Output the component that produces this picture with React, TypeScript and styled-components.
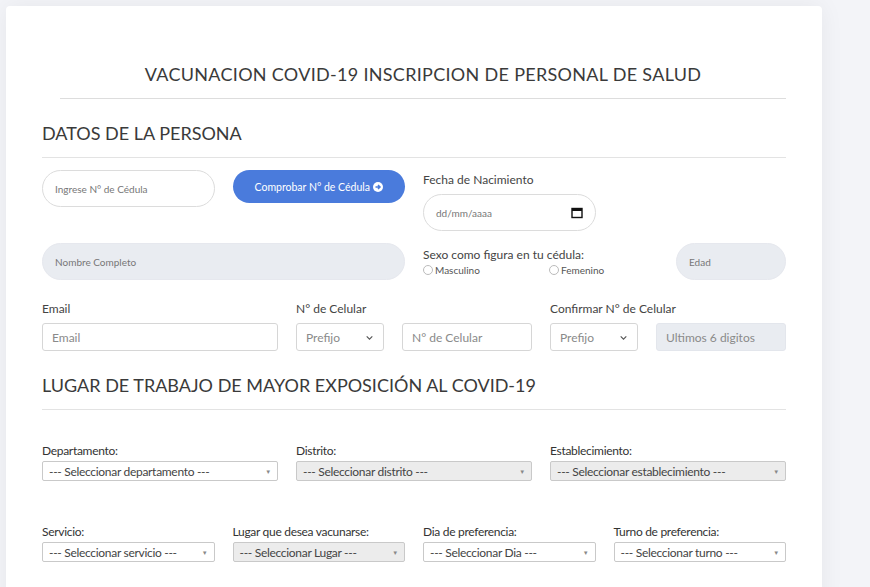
import React from 'react';
import styled, { createGlobalStyle } from 'styled-components';

const Global = createGlobalStyle`
  body { margin: 0; background: #f3f4f8; font-family: Lato, "Open Sans", sans-serif; color: #333; }
  * { box-sizing: border-box; }
`;

const Page = styled.div`
  padding: 6px 0 0 6px;
  height: 587px;
  overflow: hidden;
`;

const Card = styled.div`
  width: 816px;
  min-height: 600px;
  background: #fff;
  border-radius: 4px;
  box-shadow: 0 0 24px rgba(0, 0, 0, 0.06);
  padding: 57px 36px 0 36px;
`;

const Title = styled.h1`
  margin: 0 0 0 18px;
  font-size: 18px;
  font-weight: 400;
  text-align: center;
  letter-spacing: 0.3px;
  color: #3a3a3a;
  padding-bottom: 13px;
  border-bottom: 1px solid #ddd;
`;

const Section = styled.h2`
  margin: 23px 0 0;
  font-size: 18px;
  font-weight: 400;
  color: #3a3a3a;
  padding-bottom: 13px;
  border-bottom: 1px solid #e3e3e3;
`;

const Grid = styled.div<{ $cols: string; $top: number; $align?: string }>`
  display: grid;
  grid-template-columns: ${(p) => p.$cols};
  column-gap: 18px;
  margin-top: ${(p) => p.$top}px;
  align-items: ${(p) => p.$align || 'start'};
`;

const Field = styled.div`
  display: flex;
  flex-direction: column;
  min-width: 0;
`;

const Label = styled.label`
  font-size: 12px;
  color: #444;
  margin-bottom: 7px;
`;

const Pill = styled.div<{ $gray?: boolean }>`
  height: 37px;
  border-radius: 19px;
  border: 1px solid ${(p) => (p.$gray ? '#e6e8ee' : '#dcdcdc')};
  background: ${(p) => (p.$gray ? '#e9ecf1' : '#fff')};
  display: flex;
  align-items: center;
  justify-content: space-between;
  padding: 0 12px;
  font-size: 10px;
  color: #777;
`;

const BlueButton = styled.div`
  height: 33px;
  border-radius: 17px;
  background: #4a7bdc;
  color: #fff;
  font-size: 10.5px;
  display: flex;
  align-items: center;
  justify-content: center;
  gap: 3px;
`;

const Radios = styled.div`
  display: grid;
  grid-template-columns: 126px auto;
  font-size: 10px;
  color: #555;
`;

const Radio = styled.span`
  display: flex;
  align-items: center;
  gap: 2px;
  &::before {
    content: '';
    width: 8px;
    height: 8px;
    border: 1px solid #bbb;
    border-radius: 50%;
  }
`;

const Box = styled.div<{ $gray?: boolean }>`
  height: 28px;
  border: 1px solid ${(p) => (p.$gray ? '#e3e6ec' : '#d6d6d6')};
  border-radius: 3px;
  background: ${(p) => (p.$gray ? '#e9ecf1' : '#fff')};
  display: flex;
  align-items: center;
  justify-content: space-between;
  padding: 0 9px;
  font-size: 12px;
  color: #8a8a8a;
`;

const Pair = styled.div`
  display: grid;
  grid-template-columns: 88px 1fr;
  gap: 18px;
`;

const Select = styled.div<{ $gray?: boolean }>`
  height: 20px;
  border: 1px solid #c9c9c9;
  border-radius: 2px;
  background: ${(p) => (p.$gray ? '#ececec' : '#fff')};
  display: flex;
  align-items: center;
  justify-content: space-between;
  padding: 0 6px;
  font-size: 12px;
  color: #444;
  letter-spacing: -0.3px;
  &::after { content: '▼'; font-size: 6px; color: #888; }
`;

const SLabel = styled.div`
  font-size: 12px;
  color: #333;
  letter-spacing: -0.3px;
  margin-bottom: 3px;
`;

const Chevron = () => (
  <svg width="9" height="9" viewBox="0 0 16 16"><path d="M3 6l5 5 5-5" fill="none" stroke="#555" strokeWidth="2" /></svg>
);

const Cal = () => (
  <svg width="12" height="12" viewBox="0 0 12 12"><rect x="1" y="1.5" width="10" height="9" fill="none" stroke="#111" strokeWidth="1.4" /><rect x="1" y="1.5" width="10" height="2.5" fill="#111" /></svg>
);

const Arrow = () => (
  <svg width="10" height="10" viewBox="0 0 10 10"><circle cx="5" cy="5" r="5" fill="#fff" /><path d="M2.5 5h4M5 3l2 2-2 2" stroke="#4a7bdc" strokeWidth="1.5" fill="none" /></svg>
);

const SelectField = ({ label, text, gray }: { label: string; text: string; gray?: boolean }) => (
  <Field>
    <SLabel>{label}</SLabel>
    <Select $gray={gray}>{text}</Select>
  </Field>
);

const four = 'repeat(4, minmax(0, 1fr))';
const three = 'repeat(3, minmax(0, 1fr))';

export default function App() {
  return (
    <Page>
      <Global />
      <Card>
        <Title>VACUNACION COVID-19 INSCRIPCION DE PERSONAL DE SALUD</Title>
        <Section>DATOS DE LA PERSONA</Section>

        <Grid $cols={four} $top={12}>
          <Pill>Ingrese N° de Cédula</Pill>
          <BlueButton>Comprobar N° de Cédula <Arrow /></BlueButton>
          <Field style={{ gridColumn: 'span 2' }}>
            <Label style={{ marginTop: 2 }}>Fecha de Nacimiento</Label>
            <Pill style={{ width: 173 }}>dd/mm/aaaa <Cal /></Pill>
          </Field>
        </Grid>

        <Grid $cols={four} $top={12} $align="center">
          <Pill $gray style={{ gridColumn: 'span 2' }}>Nombre Completo</Pill>
          <Field>
            <Label style={{ marginBottom: 2 }}>Sexo como figura en tu cédula:</Label>
            <Radios>
              <Radio>Masculino</Radio>
              <Radio>Femenino</Radio>
            </Radios>
          </Field>
          <Pill $gray style={{ width: 110, justifySelf: 'end' }}>Edad</Pill>
        </Grid>

        <Grid $cols={three} $top={21}>
          <Field>
            <Label>Email</Label>
            <Box>Email</Box>
          </Field>
          <Field>
            <Label>N° de Celular</Label>
            <Pair>
              <Box>Prefijo <Chevron /></Box>
              <Box>N° de Celular</Box>
            </Pair>
          </Field>
          <Field>
            <Label>Confirmar N° de Celular</Label>
            <Pair>
              <Box>Prefijo <Chevron /></Box>
              <Box $gray>Ultimos 6 digitos</Box>
            </Pair>
          </Field>
        </Grid>

        <Section style={{ marginTop: 23 }}>LUGAR DE TRABAJO DE MAYOR EXPOSICIÓN AL COVID-19</Section>

        <Grid $cols={three} $top={33}>
          <SelectField label="Departamento:" text="--- Seleccionar departamento ---" />
          <SelectField label="Distrito:" text="--- Seleccionar distrito ---" gray />
          <SelectField label="Establecimiento:" text="--- Seleccionar establecimiento ---" gray />
        </Grid>

        <Grid $cols={four} $top={43}>
          <SelectField label="Servicio:" text="--- Seleccionar servicio ---" />
          <SelectField label="Lugar que desea vacunarse:" text="--- Seleccionar Lugar ---" gray />
          <SelectField label="Dia de preferencia:" text="--- Seleccionar Dia ---" />
          <SelectField label="Turno de preferencia:" text="--- Seleccionar turno ---" />
        </Grid>
      </Card>
    </Page>
  );
}
